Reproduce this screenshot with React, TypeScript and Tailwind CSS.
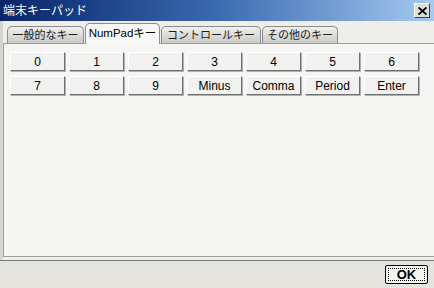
import React from "react";

const FONT = { fontFamily: '"Liberation Sans", "Noto Sans CJK JP", sans-serif' };

function Tab({ label, selected }: { label: string; selected?: boolean }) {
  if (selected) {
    return (
      <div className="relative z-10 -mb-px flex h-[21px] items-center justify-center whitespace-nowrap rounded-t-[5px] border border-b-0 border-[#8c8c8c] bg-[#f7f7f5] pb-[1px] text-[11.5px] leading-none text-black">
        {label}
      </div>
    );
  }
  return (
    <div className="flex h-[17px] items-center justify-center whitespace-nowrap rounded-t-[5px] border border-b-0 border-[#8c8c8c] bg-gradient-to-b from-[#f0f0ee] to-[#c9c9c5] text-[11px] leading-none text-[#202020]">
      {label}
    </div>
  );
}

function Key({ label }: { label: string }) {
  return (
    <div className="flex h-[19px] w-[55px] items-center justify-center border border-t-white border-l-white border-r-[#707070] border-b-[#707070] bg-[#f1f1ef] text-[12px] leading-none text-black shadow-[1px_1px_0_#b0b0b0]">
      {label}
    </div>
  );
}

export default function App() {
  const row1 = ["0", "1", "2", "3", "4", "5", "6"];
  const row2 = ["7", "8", "9", "Minus", "Comma", "Period", "Enter"];
  return (
    <div className="flex h-[288px] w-[434px] flex-col overflow-hidden bg-[#ecebe7]" style={FONT}>
      <div className="flex h-[21px] shrink-0 items-center justify-between bg-gradient-to-r from-[#0a246a] via-[#3a6ab0] to-[#a6caf0] pl-[3px] pr-[4px]">
        <span className="text-[12px] leading-none text-white">端末キーパッド</span>
        <div className="flex h-[15px] w-[16px] items-center justify-center border border-t-white border-l-white border-r-[#404040] border-b-[#404040] bg-[#e0ded8]">
          <svg width="9" height="8" viewBox="0 0 9 8">
            <path d="M0.5 0.5 L8.5 7.5 M8.5 0.5 L0.5 7.5" stroke="#000" strokeWidth="1.8" />
          </svg>
        </div>
      </div>
      <div className="flex flex-1 flex-col border-l-[3px] border-l-[#d6d4ce] bg-[#efeeea] pt-[2px]">
        <div className="flex items-end gap-[1px] pl-[4px]">
          <div className="w-[77px]"><Tab label="一般的なキー" /></div>
          <div className="w-[75px]"><Tab label="NumPadキー" selected /></div>
          <div className="w-[100px]"><Tab label="コントロールキー" /></div>
          <div className="w-[76px]"><Tab label="その他のキー" /></div>
        </div>
        <div className="flex flex-1 flex-col gap-[5px] border border-r-0 border-[#9c9c9c] bg-[#f5f5f3] pl-[6px] pt-[8px]">
          <div className="flex gap-[4px]">
            {row1.map((k) => (
              <Key key={k} label={k} />
            ))}
          </div>
          <div className="flex gap-[4px]">
            {row2.map((k) => (
              <Key key={k} label={k} />
            ))}
          </div>
        </div>
        <div className="h-[3px] bg-[#efeeea]" />
      </div>
      <div className="h-px bg-[#777]" />
      <div className="flex h-[27px] shrink-0 items-center justify-end bg-[#e5e3dd] pr-[6px]">
        <div className="flex h-[19px] w-[43px] items-center justify-center rounded-[2px] border border-black bg-[#f4f4f2] p-[2px]">
          <div className="flex h-full w-full items-center justify-center border border-dotted border-black text-[13px] font-bold leading-none text-black">
            OK
          </div>
        </div>
      </div>
    </div>
  );
}
